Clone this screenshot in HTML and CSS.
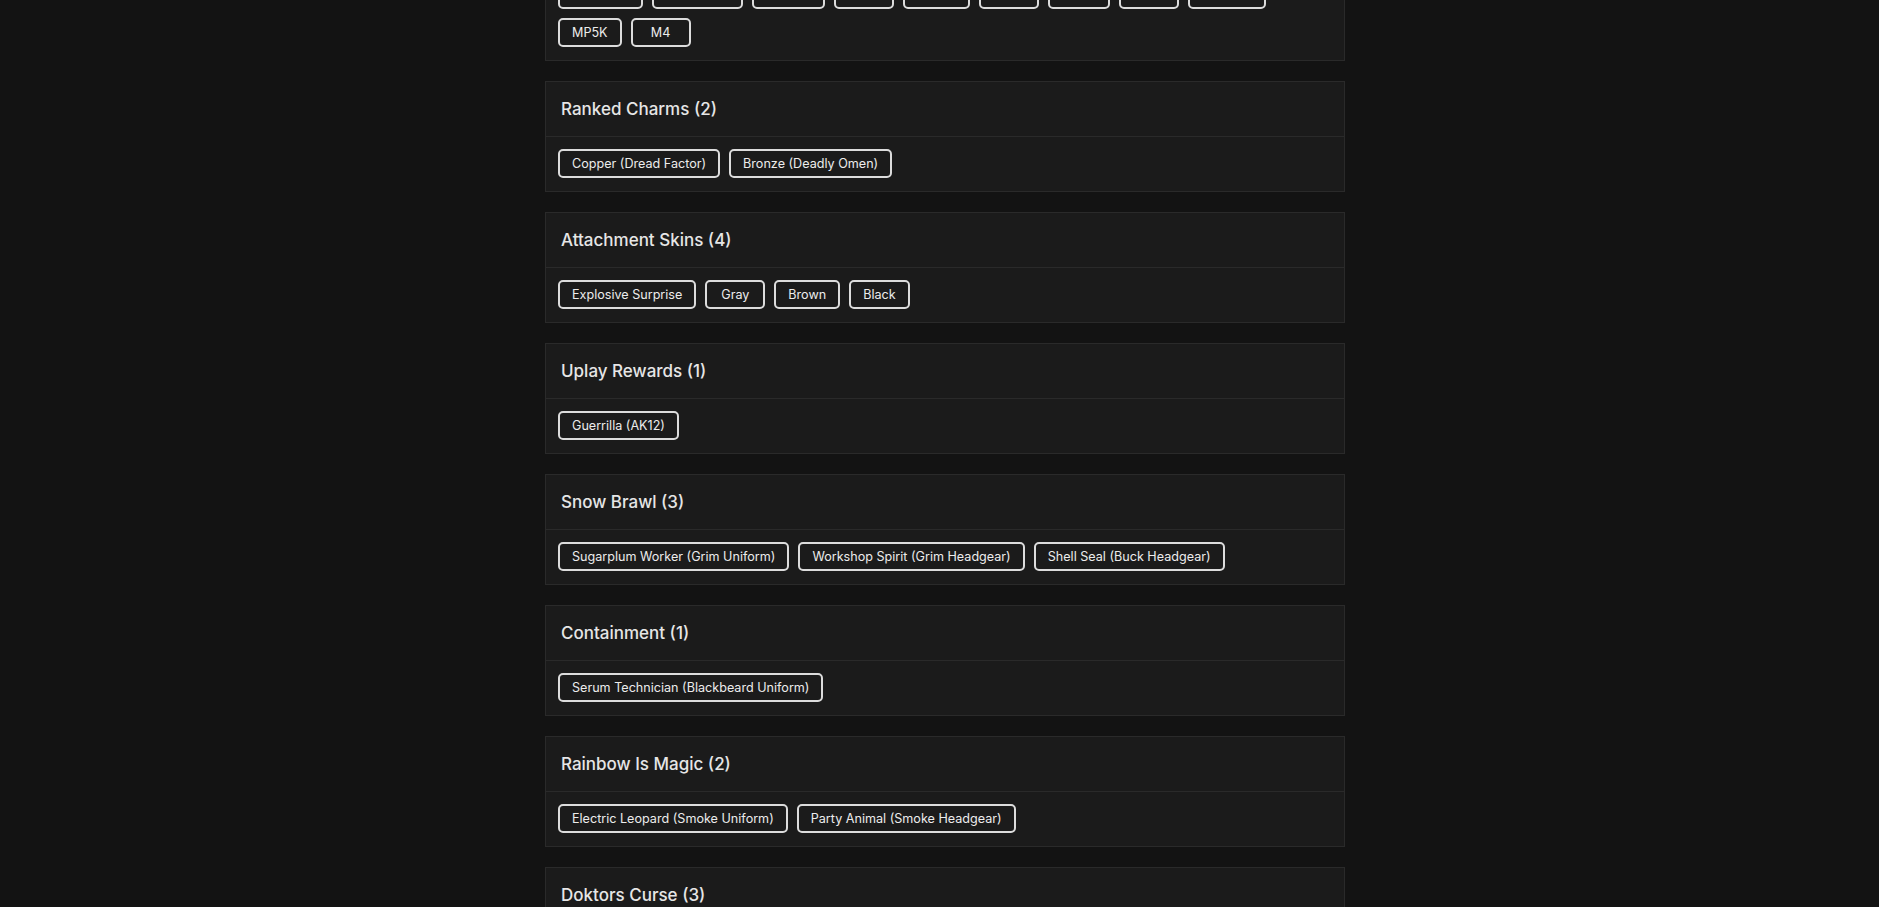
FILE: index.html
```html
<!DOCTYPE html>
<html lang="en">
<head>
    <meta charset="UTF-8">
    <meta name="viewport" content="width=device-width, initial-scale=1.0">
    <title>Unlocked Items</title>
    <link rel="stylesheet" href="styles.css">
</head>
<body>
    <div class="list">
        <div class="group">
            <h3 class="group-title">Weapon Skins (11)</h3>
            <div class="tags">
                <span class="tag">SC3000K</span>
                <span class="tag">ALDA 5.56</span>
                <span class="tag">UMP45</span>
                <span class="tag">P90</span>
                <span class="tag">L85A2</span>
                <span class="tag">MP7</span>
                <span class="tag">M762</span>
                <span class="tag">F2</span>
                <span class="tag">C8-SFW</span>
                <span class="tag">MP5K</span>
                <span class="tag">M4</span>
            </div>
        </div>

        <div class="group">
            <h3 class="group-title">Ranked Charms (2)</h3>
            <div class="tags">
                <span class="tag">Copper (Dread Factor)</span>
                <span class="tag">Bronze (Deadly Omen)</span>
            </div>
        </div>

        <div class="group">
            <h3 class="group-title">Attachment Skins (4)</h3>
            <div class="tags">
                <span class="tag">Explosive Surprise</span>
                <span class="tag">Gray</span>
                <span class="tag">Brown</span>
                <span class="tag">Black</span>
            </div>
        </div>

        <div class="group">
            <h3 class="group-title">Uplay Rewards (1)</h3>
            <div class="tags">
                <span class="tag">Guerrilla (AK12)</span>
            </div>
        </div>

        <div class="group">
            <h3 class="group-title">Snow Brawl (3)</h3>
            <div class="tags">
                <span class="tag">Sugarplum Worker (Grim Uniform)</span>
                <span class="tag">Workshop Spirit (Grim Headgear)</span>
                <span class="tag">Shell Seal (Buck Headgear)</span>
            </div>
        </div>

        <div class="group">
            <h3 class="group-title">Containment (1)</h3>
            <div class="tags">
                <span class="tag">Serum Technician (Blackbeard Uniform)</span>
            </div>
        </div>

        <div class="group">
            <h3 class="group-title">Rainbow Is Magic (2)</h3>
            <div class="tags">
                <span class="tag">Electric Leopard (Smoke Uniform)</span>
                <span class="tag">Party Animal (Smoke Headgear)</span>
            </div>
        </div>

        <div class="group">
            <h3 class="group-title">Doktors Curse (3)</h3>
            <div class="tags">
                <span class="tag">Bloody Mary (Kapkan Uniform)</span>
                <span class="tag">Hex (Frost Headgear)</span>
                <span class="tag">Nightmare (Lion Uniform)</span>
            </div>
        </div>
    </div>
</body>
</html>
```
FILE: styles.css
```css
body {
    font-family: Inter, "Liberation Sans", sans-serif;
    background-color: #131313;
    color: #e6e6e6;
    margin: 0;
    padding: 0 0 0 11px;
}
.list {
    max-width: 800px;
    margin: -88px auto 0;
}
.group {
    background: #1b1b1b;
    border: 1px solid #2a2a2a;
    margin-bottom: 20px;
}
.group-title {
    margin: 0;
    padding: 15px;
    font-size: 17px;
    font-weight: 500;
    line-height: 24px;
    border-bottom: 1px solid #2a2a2a;
}
.tags {
    display: flex;
    flex-wrap: wrap;
    gap: 9px;
    padding: 12px 12px 13px;
}
.tag {
    min-width: 60px;
    box-sizing: border-box;
    text-align: center;
    padding: 5px 12px;
    font-size: 12.6px;
    line-height: 15px;
    color: #ececec;
    border: 2px solid #dcdcdc;
    border-radius: 5px;
}
```
